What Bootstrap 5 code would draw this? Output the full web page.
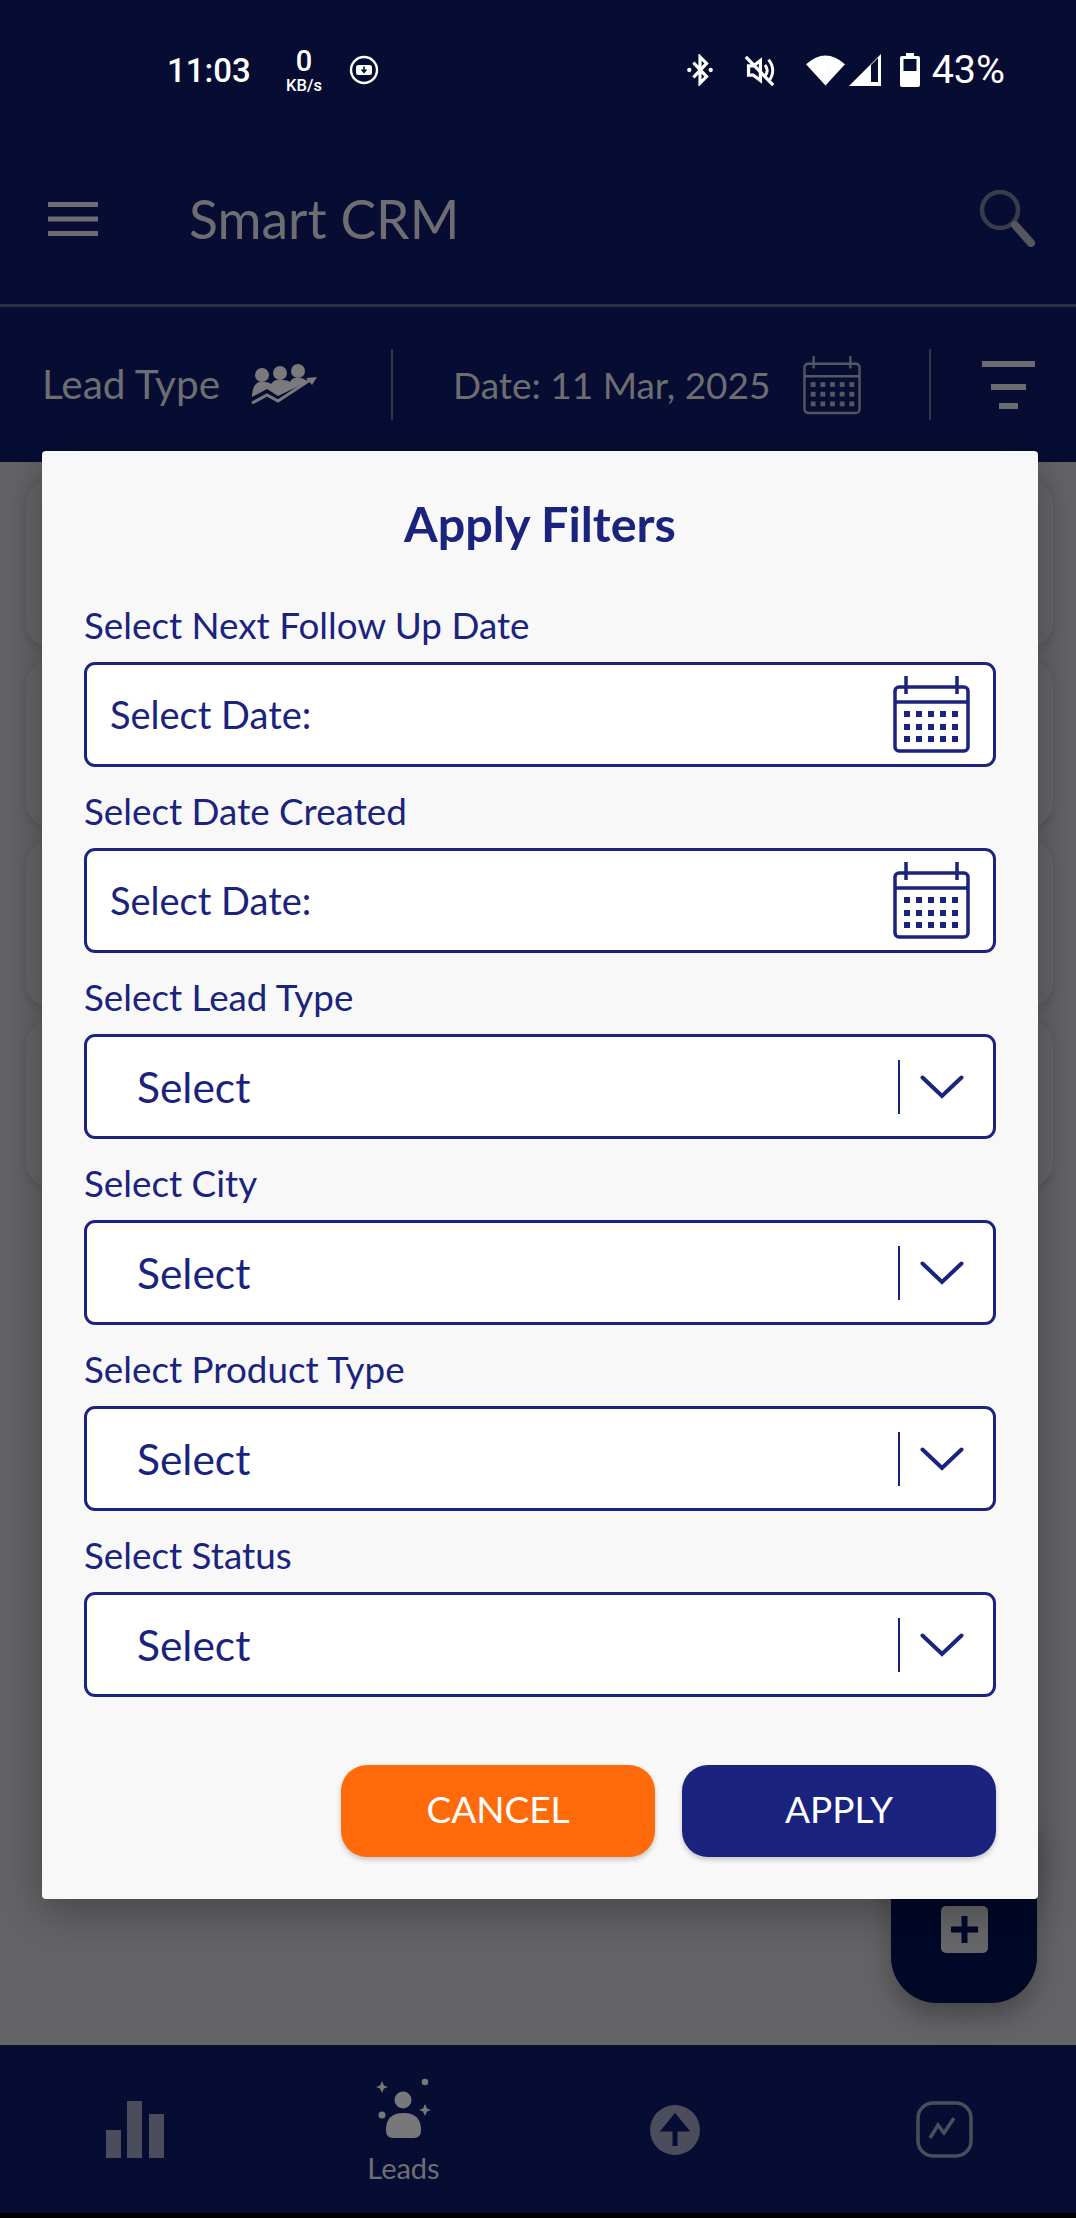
<!DOCTYPE html>
<html lang="en"><head><meta charset="utf-8">
<link href="https://cdn.jsdelivr.net/npm/bootstrap@5.3.0/dist/css/bootstrap.min.css" rel="stylesheet">
<style>
:root{--navy:#1a237e;--dark:#070c33;--muted:#6e6e72}
html,body{margin:0;width:1076px;height:2218px;overflow:hidden}
body{font-family:"Lato","Liberation Sans",sans-serif;background:#646366;position:relative}
.screen{height:2218px}
.topband{background:var(--dark);height:462px}
.statusrow{height:137px;padding:3px 0 0 167px;color:#fff}
.clock{font-size:33px;font-weight:500;font-family:"Roboto",sans-serif;width:116px;line-height:1}
.kbs{font-family:"Roboto",sans-serif;font-weight:500;line-height:1;text-align:center;width:42px;white-space:nowrap}
.kbs b{display:block;font-size:29px;font-weight:500;line-height:31px}
.kbs span{display:block;font-size:16.500px;line-height:17px}
.pct{font-family:"Roboto",sans-serif;font-size:39.500px;line-height:1;margin-left:12px}
.appbar{height:170px;border-bottom:3px solid #2d3040;padding:0 41px 4px 48px}
.apptitle{font-size:53.500px;color:var(--muted);margin-left:91px;line-height:1}
.filterbar{height:155px;color:var(--muted);padding:0 41px 0 42px}
.txtlead{font-size:40.500px;line-height:1;white-space:nowrap;width:179px}
.txtdate{font-size:37px;line-height:1;white-space:nowrap;width:316px;margin-left:60px}
.vsep{width:2px;height:71px;background:#33364a}
.bgcard{height:167px;margin:0 23px 13px 26px;border-radius:24px;background:#666568;box-shadow:0 2px 8px rgba(0,0,0,.14)}
.stack{padding-top:18px;height:1583px}
.fab{position:absolute;left:891px;top:1820px;width:146px;height:183px;border-radius:0 0 46px 46px;background:#010828;box-shadow:0 14px 26px rgba(0,0,0,.28)}
.fabplus{width:47px;height:47px;border-radius:5px;background:#68676a;position:absolute;left:50px;top:86px}
.bottomnav{height:168px;background:var(--dark)}
.navcol{flex:0 0 25%}
.navpad-a{padding-top:56px}
.navpad-b{padding-top:33px}
.navpad-c{padding-top:60px;padding-left:5px}
.navpad-d{padding-top:56px;padding-left:6px}
.navlabel{font-size:29px;line-height:1;color:#6f6f73;margin-top:15px}
.blackline{height:5px;background:#000}
.dialog{position:absolute;left:42px;top:451px;width:996px;height:1448px;background:#f8f8f9;border-radius:4px;padding:48px 42px 0;color:var(--navy);box-shadow:0 12px 44px rgba(0,0,0,.32)}
.dlgtitle{font-size:48.500px;font-weight:700;text-align:center;line-height:1;margin:0 0 62px;height:46px}
.fieldlabel{font-size:36.800px;line-height:1;height:35px;margin-bottom:20px;white-space:nowrap}
.picker{height:105px;background:#fff;border:3px solid var(--navy);border-radius:11px;margin-bottom:26px}
.picker .dtxt{font-size:38px;margin-left:23px}
.picker .stxt{font-size:42.500px;margin-left:50px}
.picker svg.cal{margin-right:23px}
.seldiv{width:2px;height:54px;background:#1a237e;margin-right:20px}
.chev{margin-right:29px}
.actions{margin-top:68px;gap:27px}
.actbtn{width:314px;height:92px;border:0;border-radius:26px;color:#fff;font-size:37px;padding-top:3px;padding-bottom:7px;box-shadow:0 3px 5px rgba(0,0,0,.2)}
.actcancel{background:#ff6b0b}
.actapply{background:var(--navy)}
</style></head>
<body>
<div class="screen">
 <div class="topband">
  <div class="statusrow d-flex align-items-center">
   <div class="clock">11:03</div>
   <div class="kbs"><b>0</b><span>KB/s</span></div>
   <svg style="margin-left:24px" width="30" height="30" viewBox="0 0 30 30"><circle cx="15" cy="15" r="13" fill="none" stroke="#fff" stroke-width="2.400"/><rect x="7" y="10" width="16" height="10" rx="2.500" fill="#fff"/><path d="M15 11.500v5m-2.500-2 2.500 2.800 2.500-2.800" stroke="#070c33" stroke-width="1.600" fill="none"/></svg>
   <div class="d-flex align-items-center ms-auto" style="margin-right:71px">
    <svg width="28" height="32" viewBox="0 0 34 36"><path d="M9 9l16 17-8 8V2l8 8L9 27" fill="none" stroke="#fff" stroke-width="3.800"/><circle cx="4" cy="18" r="2.600" fill="#fff"/><circle cx="30" cy="18" r="2.600" fill="#fff"/></svg>
    <svg style="margin-left:30px" width="31" height="33" viewBox="0 0 34 36"><path d="M5 13h5l8-6v22l-8-6H5z" fill="none" stroke="#fff" stroke-width="3.600"/><path d="M23 12q5 6 0 12M27 6q9 12 0 24" fill="none" stroke="#fff" stroke-width="3.200"/><path d="M2 3l30 31" stroke="#fff" stroke-width="3.600"/></svg>
    <svg width="39" height="32" viewBox="0 0 40 32" style="margin-left:31px"><path d="M0 10Q20-8 40 10L20 32z" fill="#fff"/></svg>
    <svg style="margin-left:4px" width="32" height="32" viewBox="0 0 32 32"><path d="M32 0v32H0z" fill="#fff"/><path d="M22 11l7-7v24h-7z" fill="#070c33"/></svg>
    <svg width="20" height="34" viewBox="0 0 20 34" style="margin-left:19px"><path d="M6 0h8v3h4a2 2 0 0 1 2 2v27a2 2 0 0 1-2 2H2a2 2 0 0 1-2-2V5a2 2 0 0 1 2-2h4z" fill="#fff"/><rect x="3.500" y="6" width="13" height="12" fill="#070c33"/></svg>
    <div class="pct">43%</div>
   </div>
  </div>
  <div class="appbar d-flex align-items-center">
   <svg width="50" height="34" viewBox="0 0 50 34"><path d="M0 2.500h50M0 17h50M0 31.500h50" stroke="#6b6b70" stroke-width="5"/></svg>
   <div class="apptitle">Smart CRM</div>
   <svg class="ms-auto" width="57" height="57" viewBox="0 0 57 57"><circle cx="22" cy="20" r="18" fill="none" stroke="#3a3c4c" stroke-width="4.500"/><path d="M37 35l16 18" stroke="#55565f" stroke-width="8" stroke-linecap="round"/></svg>
  </div>
  <div class="filterbar d-flex align-items-center">
   <div class="txtlead">Lead Type</div>
   <svg style="margin-left:29px" width="67" height="41" viewBox="0 0 67 41"><g fill="#7a7a7c"><circle cx="12" cy="11" r="7"/><circle cx="30" cy="9" r="7"/><circle cx="48" cy="7" r="7"/><path d="M2 31Q3 20 9 18H15Q19 18 21 20Q24 16 27 16H33Q38 16 40 18Q42 14 45 14H51Q56 15 57 18L28 32L17 25L2 33Z"/></g><path d="M2 39L17 31L28 37L60 16" fill="none" stroke="#7a7a7c" stroke-width="3"/><path d="M67 13l-11 1 6 7z" fill="#7a7a7c"/></svg>
   <div class="vsep" style="margin-left:74px"></div>
   <div class="txtdate">Date: 11 Mar, 2025</div>
   <svg width="58" height="60" viewBox="0 0 60 62" style="margin-left:34px"><g stroke="#55565f" fill="none" stroke-width="2.500"><rect x="1.500" y="9" width="57" height="51" rx="4"/><path d="M1.500 22h57M11 1v13M49 1v13"/></g><g fill="#55565f"><rect x="8" y="28" width="5" height="5"/><rect x="18" y="28" width="5" height="5"/><rect x="28" y="28" width="5" height="5"/><rect x="38" y="28" width="5" height="5"/><rect x="48" y="28" width="5" height="5"/><rect x="8" y="38" width="5" height="5"/><rect x="18" y="38" width="5" height="5"/><rect x="28" y="38" width="5" height="5"/><rect x="38" y="38" width="5" height="5"/><rect x="48" y="38" width="5" height="5"/><rect x="8" y="48" width="5" height="5"/><rect x="18" y="48" width="5" height="5"/><rect x="28" y="48" width="5" height="5"/><rect x="38" y="48" width="5" height="5"/><rect x="48" y="48" width="5" height="5"/></g></svg>
   <div class="vsep" style="margin-left:68px"></div>
   <svg class="ms-auto" width="53" height="48" viewBox="0 0 53 48"><path d="M0 3h53M9 26h35M17 45h19" stroke="#6b6b70" stroke-width="6"/></svg>
  </div>
 </div>
 <div class="stack">
  <div class="bgcard"></div><div class="bgcard"></div><div class="bgcard"></div><div class="bgcard"></div>
 </div>
 <div class="bottomnav d-flex">
  <div class="navcol navpad-a d-flex flex-column align-items-center"><svg width="58" height="57" viewBox="0 0 58 57"><g fill="#4b4d5c"><rect x="0" y="29" width="15" height="28"/><rect x="21" y="0" width="15" height="57"/><rect x="43" y="13" width="15" height="44"/></g></svg></div>
  <div class="navcol navpad-b d-flex flex-column align-items-center"><svg width="55" height="60" viewBox="0 0 55 60"><g fill="#78787a"><circle cx="27" cy="22" r="8.500"/><path d="M10 52Q10 35 27.500 35T45 52Q45 60 38 60H17Q10 60 10 52Z"/><circle cx="6" cy="37" r="3.500"/><circle cx="49" cy="4" r="3.300"/><path d="M6 3l2 4.500 4 1.500-4 1.500-2 4.500-2-4.500-4-1.500 4-1.500z"/><path d="M49 26l2 4.500 4 1.500-4 1.500-2 4.500-2-4.500-4-1.500 4-1.500z"/></g></svg><div class="navlabel">Leads</div></div>
  <div class="navcol navpad-c d-flex flex-column align-items-center"><svg width="50" height="50" viewBox="0 0 50 50"><circle cx="25" cy="25" r="25" fill="#4b4d5c"/><path d="M25 41V22m-10 2 10-12 10 12z" fill="#070c33" stroke="#070c33" stroke-width="5"/></svg></div>
  <div class="navcol navpad-d d-flex flex-column align-items-center"><svg width="57" height="57" viewBox="0 0 57 57"><rect x="2" y="2" width="53" height="53" rx="15" fill="none" stroke="#4b4d5c" stroke-width="3.500"/><path d="M14 37l8-13 6 8 10-15" fill="none" stroke="#4b4d5c" stroke-width="3.500"/></svg></div>
 </div>
 <div class="blackline"></div>
</div>
<div class="fab"><div class="fabplus d-flex align-items-center justify-content-center"><svg width="27" height="27" viewBox="0 0 27 27"><path d="M13.500 0v27M0 13.500h27" stroke="#02082a" stroke-width="6"/></svg></div></div>
<div class="dialog" role="dialog">
 <h2 class="dlgtitle">Apply Filters</h2>
 <div class="fieldlabel">Select Next Follow Up Date</div>
 <div class="picker d-flex align-items-center justify-content-between"><span class="dtxt">Select Date:</span>
  <svg class="cal" width="77" height="77" viewBox="0 0 77 77"><use href="#calicon"/></svg></div>
 <div class="fieldlabel">Select Date Created</div>
 <div class="picker d-flex align-items-center justify-content-between"><span class="dtxt">Select Date:</span>
  <svg class="cal" width="77" height="77" viewBox="0 0 77 77"><use href="#calicon"/></svg></div>
 <div class="fieldlabel">Select Lead Type</div>
 <div class="picker d-flex align-items-center"><span class="stxt me-auto">Select</span><div class="seldiv"></div><svg class="chev" width="44" height="24" viewBox="0 0 44 24"><path d="M2.500 2.500L22 21L41.500 2.500" fill="none" stroke="#1a237e" stroke-width="4" stroke-linecap="round"/></svg></div>
 <div class="fieldlabel">Select City</div>
 <div class="picker d-flex align-items-center"><span class="stxt me-auto">Select</span><div class="seldiv"></div><svg class="chev" width="44" height="24" viewBox="0 0 44 24"><path d="M2.500 2.500L22 21L41.500 2.500" fill="none" stroke="#1a237e" stroke-width="4" stroke-linecap="round"/></svg></div>
 <div class="fieldlabel">Select Product Type</div>
 <div class="picker d-flex align-items-center"><span class="stxt me-auto">Select</span><div class="seldiv"></div><svg class="chev" width="44" height="24" viewBox="0 0 44 24"><path d="M2.500 2.500L22 21L41.500 2.500" fill="none" stroke="#1a237e" stroke-width="4" stroke-linecap="round"/></svg></div>
 <div class="fieldlabel">Select Status</div>
 <div class="picker d-flex align-items-center"><span class="stxt me-auto">Select</span><div class="seldiv"></div><svg class="chev" width="44" height="24" viewBox="0 0 44 24"><path d="M2.500 2.500L22 21L41.500 2.500" fill="none" stroke="#1a237e" stroke-width="4" stroke-linecap="round"/></svg></div>
 <div class="actions d-flex justify-content-end">
  <button class="btn actbtn actcancel" type="button">CANCEL</button>
  <button class="btn actbtn actapply" type="button">APPLY</button>
 </div>
</div>
<svg width="0" height="0" class="d-block" aria-hidden="true"><defs><g id="calicon"><g fill="none" stroke="#1a237e" stroke-width="3.500"><rect x="2" y="11" width="73" height="64" rx="4"/><path d="M2 26h73M13 0v18M64 0v18"/></g><g fill="#1a237e"><rect x="11" y="35" width="6" height="6"/><rect x="23" y="35" width="6" height="6"/><rect x="35" y="35" width="6" height="6"/><rect x="47" y="35" width="6" height="6"/><rect x="59" y="35" width="6" height="6"/><rect x="11" y="48" width="6" height="6"/><rect x="23" y="48" width="6" height="6"/><rect x="35" y="48" width="6" height="6"/><rect x="47" y="48" width="6" height="6"/><rect x="59" y="48" width="6" height="6"/><rect x="11" y="60" width="6" height="6"/><rect x="23" y="60" width="6" height="6"/><rect x="35" y="60" width="6" height="6"/><rect x="47" y="60" width="6" height="6"/><rect x="59" y="60" width="6" height="6"/></g></g></defs></svg>
<script src="https://cdn.jsdelivr.net/npm/bootstrap@5.3.0/dist/js/bootstrap.bundle.min.js"></script>
</body></html>
